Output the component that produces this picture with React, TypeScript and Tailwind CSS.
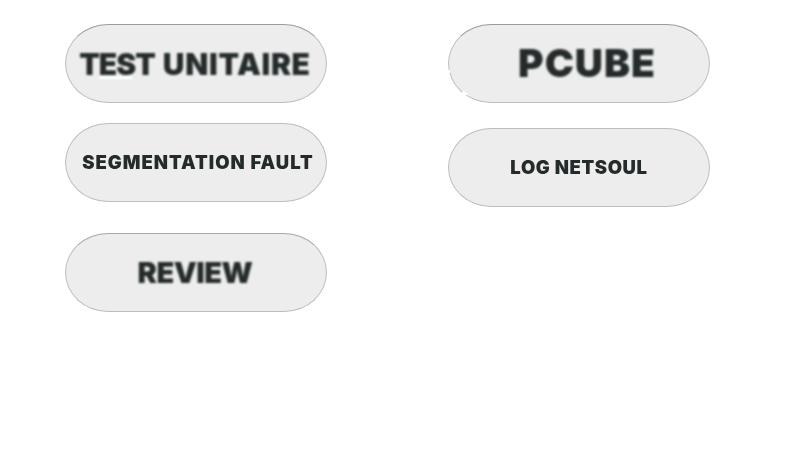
import type { ReactNode } from 'react';

type PillProps = { className?: string; children: ReactNode };

function Pill({ className = '', children }: PillProps) {
  return (
    <div
      className={`relative flex h-[79px] w-[262px] shrink-0 items-center justify-center whitespace-pre rounded-[43px/39.5px] border border-[#bdbdbd] bg-[#ededed] font-black leading-none text-[#252b2b] ${className}`}
    >
      {children}
    </div>
  );
}

export default function App() {
  return (
    <main className="flex h-[450px] w-[800px] gap-[121px] overflow-hidden bg-white pl-[65px] pt-6 font-['Inter','Liberation_Sans',sans-serif]">
      <section className="flex flex-col">
        <Pill className="border-t-[#9c9c9c]">
          <i className="absolute left-[33px] top-[51px] h-[3px] w-[34px] rounded-full bg-white blur-[1px]" />
          <span className="relative -translate-x-px text-[30px] blur-[0.8px]">
            <span className="tracking-[-1px]">TEST</span>
            <span className="tracking-[2px]"> </span>
            <span className="tracking-[0.7px]">UNITAIRE</span>
          </span>
        </Pill>
        <Pill className="mt-5">
          <span className="translate-x-[2px] text-[18.5px] tracking-[1px] blur-[0.5px]">SEGMENTATION FAULT</span>
        </Pill>
        <Pill className="mt-[31px] border-t-[#a8a8a8]">
          <span className="-translate-x-px text-[29px] tracking-[-0.5px] blur-[0.8px]">REVIEW</span>
        </Pill>
      </section>
      <section className="flex flex-col">
        <Pill className="border-t-[#9c9c9c]">
          <span className="-translate-y-px translate-x-[8px] text-[39px] tracking-[1px] blur-[0.9px]">PCUBE</span>
          <i className="absolute -left-0.5 top-[45px] h-[3px] w-[3px] bg-white" />
          <i className="absolute left-[13px] top-[67px] h-[3px] w-[5px] rotate-[35deg] bg-white" />
        </Pill>
        <Pill className="mt-[25px]">
          <span className="text-[18.5px] tracking-[0.6px] blur-[0.5px]">LOG NETSOUL</span>
        </Pill>
      </section>
    </main>
  );
}
